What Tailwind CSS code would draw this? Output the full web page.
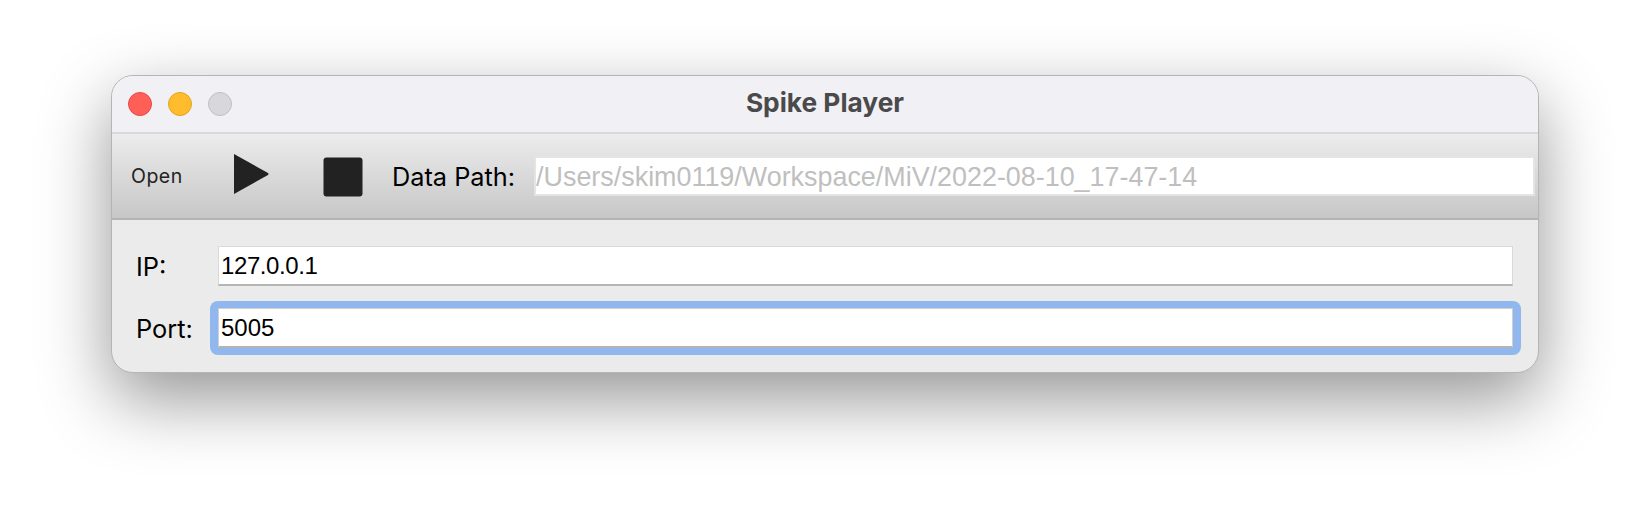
<!DOCTYPE html>
<html lang="en">
<head>
    <meta charset="UTF-8">
    <title>Spike Player</title>
    <script src="https://cdn.jsdelivr.net/npm/@tailwindcss/browser@4"></script>
</head>
<body class="bg-white h-[520px] overflow-hidden font-['Inter','Liberation_Sans',sans-serif]">
    <div class="pt-[75px] pl-[111px]">
        <div class="w-[1428px] h-[298px] flex flex-col rounded-[22px] overflow-hidden border border-[#b5b5b5] bg-[#ebebeb] shadow-[0_26px_70px_rgba(0,0,0,0.42)]">
            <!-- title bar -->
            <div class="relative h-[58px] shrink-0 flex items-center pl-[16px] gap-[16px] bg-[#f0f0f5] border-b-2 border-[#d9d9d9]">
                <span class="w-[24px] h-[24px] rounded-full bg-[#ff5f57] border border-[#e5484a]"></span>
                <span class="w-[24px] h-[24px] rounded-full bg-[#ffbd2e] border border-[#e0a31c]"></span>
                <span class="w-[24px] h-[24px] rounded-full bg-[#d8d8dc] border border-[#bfbfc3]"></span>
                <div class="absolute inset-0 flex items-center justify-center pb-[2px] text-[26.3px] font-bold text-[#4a4a4a]">Spike Player</div>
            </div>
            <!-- toolbar -->
            <div class="h-[86px] shrink-0 flex items-center bg-gradient-to-b from-[#ececec] to-[#c7c7c7] border-b-2 border-[#b4b4b4]">
                <span class="ml-[19px] w-[102px] text-[19.5px] tracking-[0.5px] text-[#222] mt-[2px]">Open</span>
                <svg class="w-[36px] h-[42px] -mt-[4px]" viewBox="0 0 36 42"><path d="M1 1 L35 20 Q36 21 35 22 L1 41 Z" fill="#222"/></svg>
                <svg class="ml-[54px] w-[40px] h-[40px] mt-[1px]" viewBox="0 0 40 40"><rect x="0.5" y="0.5" width="39" height="39" rx="3" fill="#222"/></svg>
                <span class="ml-[29px] text-[25.3px] text-black whitespace-nowrap mt-[2px]">Data Path:</span>
                <input type="text" disabled value="/Users/skim0119/Workspace/MiV/2022-08-10_17-47-14" class="ml-[19px] flex-1 mr-[3px] min-w-0 h-[40px] -mt-[1px] pt-[3px] px-[0px] text-[26.9px] font-['Liberation_Sans'] text-[#bfbfbf] bg-white border-2 border-[#e4e4e4] outline-none">
            </div>
            <!-- form -->
            <div class="flex-1 grid grid-cols-[82px_1fr] gap-y-[22px] pl-[24px] pr-[25px] pt-[25px] content-start items-center">
                <label class="text-[25.4px] text-black mt-[3px]">IP:</label>
                <input type="text" value="127.0.0.1" class="h-[40px] px-[2px] pt-[2px] text-[24px] tracking-[-0.4px] font-['Liberation_Sans'] text-black bg-white border border-[#d9d9d9] border-b-2 border-b-[#b5b5b5] outline-none">
                <label class="text-[25.4px] text-black mt-[2px]">Port:</label>
                <div class="-mx-[8px] -my-[7px] px-[8px] py-[7px] rounded-[8px] bg-[#90b8ee]">
                    <input type="text" value="5005" class="block w-full h-[40px] px-[2px] text-[24px] font-['Liberation_Sans'] text-black bg-white border border-[#d0d0d0] border-b-2 border-b-[#b5b5b5] outline-none">
                </div>
            </div>
        </div>
    </div>
</body>
</html>
